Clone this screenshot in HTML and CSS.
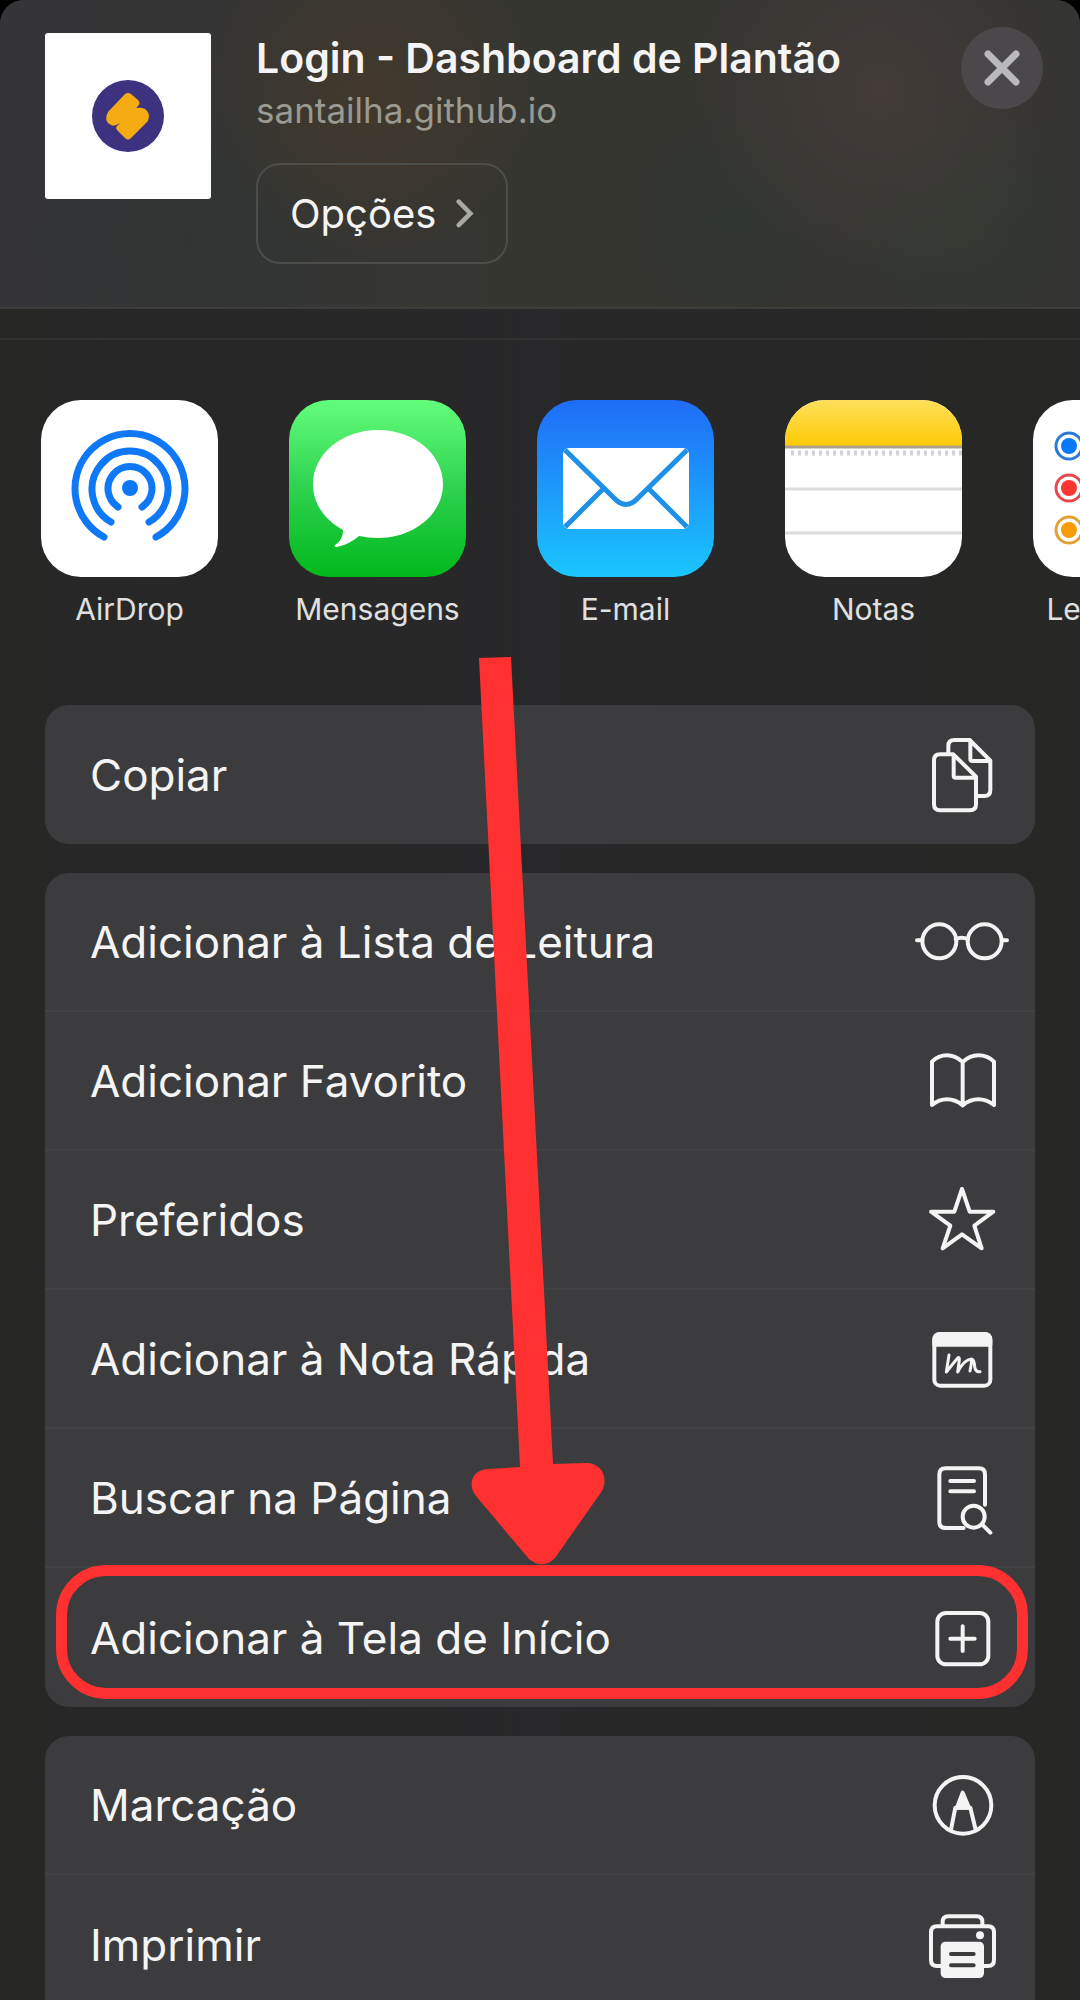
FILE: index.html
```html
<!DOCTYPE html>
<html lang="pt-BR">
<head>
<meta charset="utf-8">
<meta name="viewport" content="width=device-width, initial-scale=1">
<title>Compartilhar</title>
<link rel="stylesheet" href="styles.css">
</head>
<body>
<main class="sheet">
  <header class="header">
    <svg class="thumb" viewBox="0 0 166 166" aria-hidden="true">
      <rect width="166" height="166" rx="3" fill="#fff"/>
      <circle cx="83" cy="83" r="36" fill="#3c3280"/>
      <path d="M80 61Q83 59 86 61L93 67Q96 70 93 73L91 75Q96 74 100 76Q106 80 103 88L86 105Q83 108 80 105L72 97Q70 94 73 92L75 90Q69 94 66 92Q58 88 63 79Z" fill="#f5ac12"/>
    </svg>
    <div class="info">
      <h1 class="title">Login - Dashboard de Plantão</h1>
      <p class="site">santailha.github.io</p>
      <button class="options" type="button">Opções
        <svg class="chevron" viewBox="0 0 20 32" aria-hidden="true"><path d="M3 3L16 16L3 29"/></svg>
      </button>
    </div>
    <button class="close" type="button" aria-label="Fechar">
      <svg viewBox="0 0 82 82" aria-hidden="true"><path d="M27 27L55 55M55 27L27 55"/></svg>
    </button>
  </header>
  <div class="band"></div>

  <div class="content">
    <nav class="apps" aria-label="Aplicativos">
      <button class="app" type="button">
        <svg class="tile" viewBox="0 0 177 177" aria-hidden="true">
          <rect width="177" height="177" rx="40" fill="#fff"/>
          <circle cx="89" cy="88" r="8" fill="#0f78f6"/>
          <g fill="none" stroke="#0f78f6" stroke-width="7" stroke-linecap="round">
            <path d="M77 107A22 22 0 1 1 101 107"/>
            <path d="M70 122A38 38 0 1 1 108 122"/>
            <path d="M63 137A55 55 0 1 1 115 137"/>
          </g>
        </svg>
        <span>AirDrop</span>
      </button>
      <button class="app" type="button">
        <svg class="tile" viewBox="0 0 177 177" aria-hidden="true">
          <defs><linearGradient id="green" x2="0" y2="1"><stop offset="0" stop-color="#63fd7c"/><stop offset=".5" stop-color="#2ed24e"/><stop offset="1" stop-color="#01b81c"/></linearGradient></defs>
          <rect width="177" height="177" rx="40" fill="url(#green)"/>
          <path d="M89 30C53 30 24 54 24 84C24 104 36 120 54 130C54 137 51 142 46 145C45 147 46 147 48 147C58 145 65 140 70 136Q79 138 89 138C125 138 154 114 154 84C154 54 125 30 89 30Z" fill="#fff"/>
        </svg>
        <span>Mensagens</span>
      </button>
      <button class="app" type="button">
        <svg class="tile" viewBox="0 0 177 177" aria-hidden="true">
          <defs><linearGradient id="blue" x2="0" y2="1"><stop offset="0" stop-color="#1f6cf6"/><stop offset="1" stop-color="#1ac6fe"/></linearGradient></defs>
          <rect width="177" height="177" rx="40" fill="url(#blue)"/>
          <rect x="26" y="48" width="126" height="81" rx="6" fill="#fff"/>
          <path d="M28 50L77 98Q89 111 101 98L150 50M66 89L28 127M112 89L150 127" fill="none" stroke="#1e90e8" stroke-width="5"/>
        </svg>
        <span>E-mail</span>
      </button>
      <button class="app" type="button">
        <svg class="tile" viewBox="0 0 177 177" aria-hidden="true">
          <defs>
            <linearGradient id="yellow" x2="0" y2="1"><stop offset="0" stop-color="#ffdf5c"/><stop offset="1" stop-color="#fdca04"/></linearGradient>
            <clipPath id="round"><rect width="177" height="177" rx="40"/></clipPath>
          </defs>
          <g clip-path="url(#round)">
            <rect width="177" height="177" fill="#fff"/>
            <rect width="177" height="46" fill="url(#yellow)"/>
            <path d="M0 47H177" stroke="#aaa28c" stroke-width="3"/>
            <path d="M6 53H177" stroke="#d2d2d4" stroke-width="5" stroke-dasharray="3 4"/>
            <path d="M0 89H177M0 133H177" stroke="#dcdcdd" stroke-width="3"/>
          </g>
        </svg>
        <span>Notas</span>
      </button>
      <button class="app" type="button">
        <svg class="tile" viewBox="0 0 177 177" aria-hidden="true">
          <rect width="177" height="177" rx="40" fill="#fff"/>
          <g fill="none" stroke-width="3">
            <circle cx="36" cy="46" r="13" stroke="#2a7bd8"/><circle cx="36" cy="88" r="13" stroke="#e8474c"/><circle cx="36" cy="130" r="13" stroke="#e2a137"/>
          </g>
          <circle cx="36" cy="46" r="8" fill="#0a78fa"/><circle cx="36" cy="88" r="8" fill="#fb3630"/><circle cx="36" cy="130" r="8" fill="#f99a07"/>
          <path d="M64 67H177M64 109H177" stroke="#dcdcdd" stroke-width="3"/>
        </svg>
        <span>Lembretes</span>
      </button>
    </nav>

    <div class="actions">
      <div class="group">
        <button class="row" type="button">Copiar
          <svg class="icon" viewBox="105 103 288 240" aria-hidden="true"><path d="M205 157V136Q205 118 223 118H269L331 180V268Q331 286 313 286H292M271 119V174Q271 181 278 181H330M180 161H220L288 228V311Q288 329 270 329H180Q162 329 162 311V179Q162 161 180 161ZM221 162V225Q221 231 227 231H287"/></svg>
        </button>
      </div>

      <div class="group">
        <button class="row" type="button">Adicionar à Lista de Leitura
          <svg class="icon" viewBox="105 608 288 240" aria-hidden="true"><circle cx="178" cy="726" r="51"/><circle cx="314" cy="726" r="51"/><path d="M111 723H127M366 723H381M227 719Q245 711 264 719"/></svg>
        </button>
        <button class="row" type="button">Adicionar Favorito
          <svg class="icon" viewBox="105 1024 288 240" aria-hidden="true"><path d="M248 1087V1216M248 1087Q225 1067 201 1067Q175 1067 156 1086V1216Q177 1199 201 1199Q226 1199 248 1217Q270 1199 295 1199Q320 1199 342 1216V1086Q323 1067 295 1067Q270 1067 248 1087Z"/></svg>
        </button>
        <button class="row" type="button">Preferidos
          <svg class="icon" viewBox="105 61 288 240" aria-hidden="true"><path d="M246 88L269 156H340L283 198L305 266L246 224L188 266L211 198L153 156H223Z"/></svg>
        </button>
        <button class="row" type="button">Adicionar à Nota Rápida
          <svg class="icon" viewBox="105 478 288 240" aria-hidden="true"><rect x="163" y="523" width="168" height="155" rx="18"/><path class="solid" d="M163 555V541Q163 523 181 523H313Q331 523 331 541V555Z"/><path d="M207 586L199 637L232 596Q239 589 238 601L233 637Q252 600 274 598Q276 606 270 634M274 598Q283 599 284 621Q287 638 300 636" stroke-width="9"/></svg>
        </button>
        <button class="row" type="button">Buscar na Página
          <svg class="icon" viewBox="105 896 288 240" aria-hidden="true"><path d="M251 1106H197Q178 1106 178 1088V946Q178 927 197 927H297Q315 927 315 946V1036M211 965H282M211 996H282M306 1095L331 1120"/><circle cx="281" cy="1072" r="33"/></svg>
        </button>
        <button class="row" type="button">Adicionar à Tela de Início
          <svg class="icon" viewBox="105 174 288 240" aria-hidden="true"><rect x="172" y="219" width="153" height="154" rx="26"/><path d="M211 296H284M248 259V333"/></svg>
          <span class="ring"></span>
          <svg class="arrow" viewBox="0 0 134 910" aria-hidden="true"><path d="M8 3L40 2L82 809L114 808C130 807 138 822 131 836L84 903Q72 915 58 904L5 841C-4 830 1 814 18 814L49 812Z"/></svg>
        </button>
      </div>

      <div class="group last">
        <button class="row" type="button">Marcação
          <svg class="icon" viewBox="105 676 288 240" aria-hidden="true"><circle cx="249" cy="797" r="85"/><path d="M213 870L226 804H271L287 870"/><path class="solid" d="M231 804L248 759L267 804Z"/></svg>
        </button>
        <button class="row" type="button">Imprimir
          <svg class="icon" viewBox="105 1096 288 240" aria-hidden="true"><path d="M184 1279H171Q153 1279 153 1261V1178Q153 1160 171 1160H324Q342 1160 342 1178V1261Q342 1279 324 1279H311M188 1160V1147Q188 1130 205 1130H290Q307 1130 307 1147V1160"/><rect class="solid" x="188" y="1212" width="118" height="97" rx="8"/><circle cx="300" cy="1187" r="6" class="solid"/><path class="cut" d="M213 1243H281M213 1277H281"/></svg>
        </button>
      </div>
    </div>
  </div>
</main>
</body>
</html>
```
FILE: styles.css
```css
* { box-sizing: border-box; }

body {
  margin: 0;
  background: #000;
  color: #f4f4f5;
  font-family: Inter, "Liberation Sans", sans-serif;
}

button {
  margin: 0;
  padding: 0;
  border: 0;
  background: none;
  color: inherit;
  font: inherit;
  text-align: left;
}

svg { display: block; }

.sheet {
  display: flex;
  flex-direction: column;
  height: 100vh;
  overflow: hidden;
  border-radius: 24px 24px 0 0;
  background: linear-gradient(90deg, #272726, #28282a 50%, #272725);
}

.header {
  display: flex;
  flex: none;
  align-items: flex-start;
  padding: 27px 37px 43px 45px;
  border-bottom: 2px solid #3d3d3c;
  background:
    radial-gradient(circle at 370px 90px, #42392c, transparent 170px),
    radial-gradient(circle at 880px 90px, #433c39, transparent 190px),
    radial-gradient(circle at 730px 220px, #313732, transparent 120px),
    radial-gradient(circle at 960px 220px, #333a33, transparent 130px),
    radial-gradient(circle at 190px 240px, #303534, transparent 170px),
    linear-gradient(90deg, #353538, #363631 50%, #343432);
}

.thumb { flex: none; width: 166px; margin-top: 6px; }

.info { flex: 1; min-width: 0; padding-left: 45px; }

.title {
  margin: 6px 0 0;
  font-size: 41px;
  font-weight: 600;
  line-height: 50px;
  white-space: nowrap;
}

.site {
  margin: 4px 0 30px;
  color: #9a9a93;
  font-size: 35px;
  line-height: 46px;
}

.options {
  display: flex;
  align-items: center;
  gap: 20px;
  height: 101px;
  padding: 0 32px;
  border: 2px solid #4d4e49;
  border-radius: 24px;
  font-size: 40px;
}

.chevron {
  width: 18px;
  fill: none;
  stroke: #a9aaa6;
  stroke-width: 5;
  stroke-linecap: round;
}

.close {
  flex: none;
  width: 82px;
  height: 82px;
  border-radius: 50%;
  background: #4a484a;
}

.close svg {
  fill: none;
  stroke: #b9b8ba;
  stroke-width: 7;
  stroke-linecap: round;
}

.band { flex: none; height: 31px; border-bottom: 2px solid #323233; }

.content { flex: 1; min-height: 0; overflow: hidden; }

.apps {
  display: flex;
  gap: 71px;
  padding: 60px 41px 0;
  overflow: hidden;
}

.app {
  display: flex;
  flex: none;
  flex-direction: column;
  align-items: center;
  gap: 12px;
  width: 177px;
  color: #e0e0e1;
  font-size: 30px;
  line-height: 40px;
}

.tile { width: 177px; }

.actions {
  display: flex;
  flex-direction: column;
  gap: 29px;
  padding: 76px 45px 0;
}

.group { border-radius: 24px; background: #3c3c3e; }

.last { border-radius: 24px 24px 0 0; }

.row {
  position: relative;
  display: flex;
  align-items: center;
  justify-content: space-between;
  width: 100%;
  height: 139px;
  padding: 0 24px 0 45px;
  font-size: 44px;
}

.row:not(:last-child) { border-bottom: 2px solid #424244; }

.icon {
  flex: none;
  width: 96px;
  height: 80px;
  fill: none;
  stroke: #f4f4f5;
  stroke-width: 12;
  stroke-linecap: round;
  stroke-linejoin: round;
}

.solid { fill: #f4f4f5; }

.cut { stroke: #3c3c3e; }

.ring {
  position: absolute;
  inset: -3px 7px 8px 11px;
  border: 11px solid #ff3130;
  border-radius: 50px;
}

.arrow {
  position: absolute;
  bottom: 142px;
  left: 426px;
  width: 134px;
  fill: #ff3130;
}
```
